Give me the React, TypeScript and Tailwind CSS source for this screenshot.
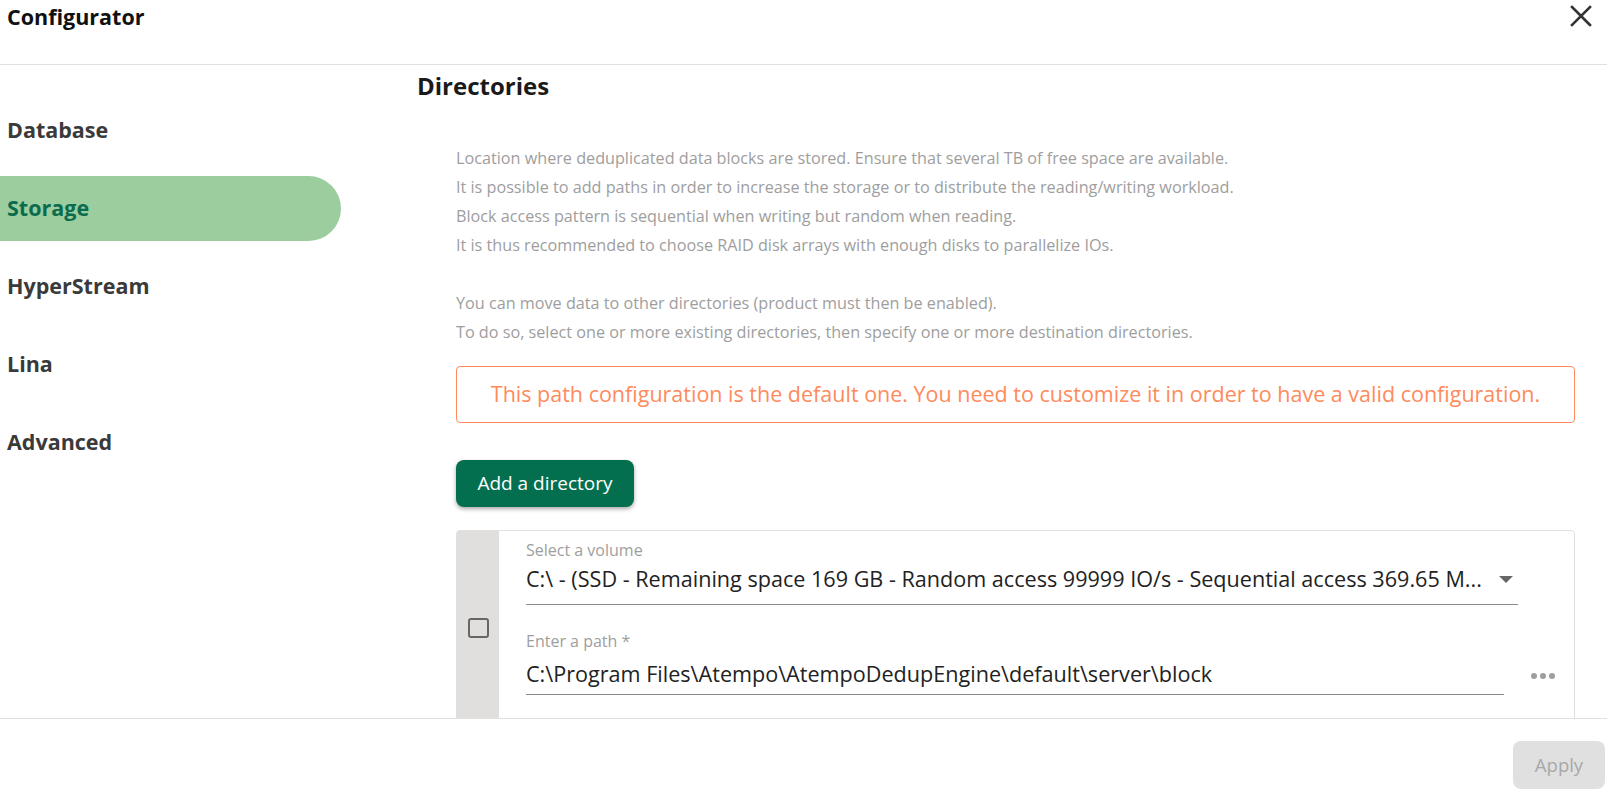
import { useState } from 'react'

const SECTIONS = ['Database', 'Storage', 'HyperStream', 'Lina', 'Advanced']

const HELP_LINES = [
  'Location where deduplicated data blocks are stored. Ensure that several TB of free space are available.',
  'It is possible to add paths in order to increase the storage or to distribute the reading/writing workload.',
  'Block access pattern is sequential when writing but random when reading.',
  'It is thus recommended to choose RAID disk arrays with enough disks to parallelize IOs.',
  '',
  'You can move data to other directories (product must then be enabled).',
  'To do so, select one or more existing directories, then specify one or more destination directories.',
]

function CloseIcon() {
  return (
    <svg width="22" height="22" viewBox="0 0 22 22" fill="none" stroke="#333" strokeWidth="2.6" strokeLinecap="square">
      <path d="M2 2 L20 20 M20 2 L2 20" />
    </svg>
  )
}

export default function App() {
  const [section, setSection] = useState('Storage')
  const [checked, setChecked] = useState(false)

  return (
    <div className="flex h-[792px] w-[1607px] flex-col overflow-hidden bg-white font-['Open_Sans',sans-serif]">
      <header className="flex h-[65px] shrink-0 items-start justify-between border-b border-[#e0e0e0] pl-[7px] pr-[15px]">
        <h1 className="mt-[3px] text-[21.5px] font-bold leading-[28px] text-[#111]">Configurator</h1>
        <button type="button" className="mt-[5px]">
          <CloseIcon />
        </button>
      </header>

      <div className="flex min-h-0 flex-1">
        <nav className="flex w-[417px] shrink-0 flex-col gap-[13px] pt-[33px]">
          {SECTIONS.map((s) => (
            <button
              key={s}
              type="button"
              onClick={() => setSection(s)}
              className={`flex h-[65px] w-[341px] items-center rounded-r-full pl-[7px] text-left text-[21.5px] font-bold ${
                section === s ? 'bg-[#9ccd9f] text-[#0a6b4d]' : 'text-[#3a3a3a]'
              }`}
            >
              {s}
            </button>
          ))}
        </nav>

        <main className="min-w-0 flex-1 overflow-hidden pr-[32px]">
          <h2 className="mt-[6px] text-[24px] font-bold leading-[30px] text-[#1a1a1a]">Directories</h2>

          <div className="ml-[39px]">
            <div className="mt-[43px] text-[16.2px] leading-[29px] text-[#9e9e9e]">
              {HELP_LINES.map((line, i) => (
                <p key={i} className="h-[29px] whitespace-nowrap">
                  {line}
                </p>
              ))}
            </div>

            <div className="mt-[19px] flex h-[57px] items-center justify-center rounded-[4px] border border-[#ff8a5b] text-[21.5px] text-[#ff8a5b]">
              This path configuration is the default one. You need to customize it in order to have a valid configuration.
            </div>

            <button
              type="button"
              className="mt-[37px] h-[47px] w-[178px] rounded-[8px] bg-[#046f4f] text-[19px] text-white shadow-[0_2px_4px_rgba(0,0,0,0.35)]"
            >
              Add a directory
            </button>

            <div className="mt-[23px] flex h-[196px] rounded-[4px] border border-[#e0e0e0]">
              <div className="flex w-[42px] shrink-0 items-center justify-center bg-[#e0dfdd]">
                <button
                  type="button"
                  onClick={() => setChecked(!checked)}
                  className="h-[20px] w-[21px] rounded-[3px] border-2 border-[#666]"
                />
              </div>

              <div className="min-w-0 flex-1 pl-[27px] pt-[10px]">
                <div className="mr-[56px]">
                  <div className="text-[16px] leading-[19px] text-[#9e9e9e]">Select a volume</div>
                  <div className="mt-[5px] flex items-center justify-between border-b border-[#8a8a8a] pb-[11px]">
                    <span className="whitespace-nowrap text-[21.6px] leading-[28px] text-[#222]">
                      C:\ - (SSD - Remaining space 169 GB - Random access 99999 IO/s - Sequential access 369.65 M...
                    </span>
                    <svg width="14" height="7" viewBox="0 0 14 7" className="mr-[5px]">
                      <path d="M0 0 L14 0 L7 7 Z" fill="#666" />
                    </svg>
                  </div>
                </div>

                <div className="mt-[27px] flex items-end">
                  <div className="min-w-0 flex-1">
                    <div className="text-[16px] leading-[19px] text-[#9e9e9e]">Enter a path *</div>
                    <div className="mt-[9px] whitespace-nowrap border-b border-[#8a8a8a] pb-[6px] text-[21.6px] leading-[28px] text-[#222]">
                      C:\Program Files\Atempo\AtempoDedupEngine\default\server\block
                    </div>
                  </div>
                  <div className="mb-[16px] ml-[27px] mr-[19px] flex gap-[3px]">
                    <span className="h-[6px] w-[6px] rounded-full bg-[#9e9e9e]" />
                    <span className="h-[6px] w-[6px] rounded-full bg-[#9e9e9e]" />
                    <span className="h-[6px] w-[6px] rounded-full bg-[#9e9e9e]" />
                  </div>
                </div>
              </div>
            </div>
          </div>
        </main>
      </div>

      <footer className="flex h-[74px] shrink-0 items-start justify-end border-t border-[#e0e0e0] pr-[2px] pt-[22px]">
        <button
          type="button"
          disabled
          className="h-[48px] w-[92px] rounded-[8px] bg-[#e0e0e0] text-[18.5px] text-[#a8a8a8]"
        >
          Apply
        </button>
      </footer>
    </div>
  )
}
